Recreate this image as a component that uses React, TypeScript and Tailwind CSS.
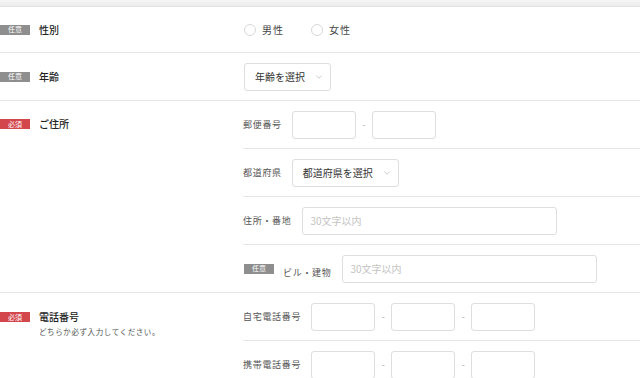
import { ChevronDown } from "lucide-react";

const font = "font-['Noto_Sans_CJK_JP','Noto_Sans',sans-serif]";

function Badge({ required }: { required?: boolean }) {
  return (
    <span
      className={`inline-flex items-center justify-center w-[30px] h-[10px] text-[7px] leading-none text-white shrink-0 ${
        required ? "bg-[#d2464c]" : "bg-[#8e8e8e]"
      }`}
    >
      {required ? "必須" : "任意"}
    </span>
  );
}

function Box({ w = "w-[64px]" }: { w?: string }) {
  return <div className={`${w} h-[28px] border border-[#dedede] rounded-[3px] bg-white shrink-0`} />;
}

function Dash() {
  return <span className="w-[16px] text-center text-[9px] text-[#aaa] shrink-0">-</span>;
}

function SubLabel({ children }: { children: React.ReactNode }) {
  return <span className="text-[9px] tracking-[0.7px] text-[#555] mr-[10px] whitespace-nowrap">{children}</span>;
}

function Select({ label, w }: { label: string; w: string }) {
  return (
    <div className={`${w} h-[28px] border border-[#dedede] rounded-[3px] flex items-center justify-between pl-[10px] pr-[6px]`}>
      <span className="text-[10px] text-[#333]">{label}</span>
      <ChevronDown size={10} strokeWidth={1.2} className="text-[#999]" />
    </div>
  );
}

function TextBox({ w }: { w: string }) {
  return (
    <div className={`${w} h-[28px] border border-[#dedede] rounded-[3px] flex items-center pl-[8px]`}>
      <span className="text-[10px] text-[#c4c4c4]">30文字以内</span>
    </div>
  );
}

function Left({ required, label, note }: { required?: boolean; label: string; note?: string }) {
  return (
    <div className="w-[243px] shrink-0">
      <div className="flex items-center gap-[9px]">
        <Badge required={required} />
        <span className="text-[10px] font-medium text-[#222] leading-[14px]">{label}</span>
      </div>
      {note && <p className="ml-[39px] mt-[2px] text-[7.5px] tracking-[0.6px] text-[#555]">{note}</p>}
    </div>
  );
}

function Radio({ label }: { label: string }) {
  return (
    <div className="flex items-center gap-[6px]">
      <span className="w-[12px] h-[12px] rounded-full border border-[#d8d8d8]" />
      <span className="text-[10px] tracking-[1px] text-[#444]">{label}</span>
    </div>
  );
}

export default function App() {
  return (
    <div className={`w-[640px] h-[378px] overflow-hidden bg-white ${font}`}>
      <div className="h-[7px] bg-gradient-to-b from-[#f5f5f5] to-[#ececec] border-b border-[#e2e2e2]" />

      <div className="h-[46px] flex items-center border-b border-[#e6e6e6]">
        <Left label="性別" />
        <div className="flex items-center gap-[27px] pl-[1px]">
          <Radio label="男性" />
          <Radio label="女性" />
        </div>
      </div>

      <div className="h-[48px] flex items-center border-b border-[#e6e6e6]">
        <Left label="年齢" />
        <div className="pl-[1px]">
          <Select label="年齢を選択" w="w-[87px]" />
        </div>
      </div>

      <div className="flex border-b border-[#e6e6e6]">
        <div className="pt-[16px]">
          <Left required label="ご住所" />
        </div>
        <div className="flex-1">
          <div className="h-[48px] flex items-center border-b border-[#e6e6e6]">
            <SubLabel>郵便番号</SubLabel>
            <Box />
            <Dash />
            <Box />
          </div>
          <div className="h-[48px] flex items-center border-b border-[#e6e6e6]">
            <SubLabel>都道府県</SubLabel>
            <Select label="都道府県を選択" w="w-[107px]" />
          </div>
          <div className="h-[48px] flex items-center border-b border-[#e6e6e6]">
            <SubLabel>住所・番地</SubLabel>
            <TextBox w="w-[255px]" />
          </div>
          <div className="h-[47px] flex items-center pl-[1px]">
            <Badge />
            <span className="ml-[9px]">
              <SubLabel>ビル・建物</SubLabel>
            </span>
            <TextBox w="w-[255px]" />
          </div>
        </div>
      </div>

      <div className="flex">
        <div className="pt-[17px]">
          <Left required label="電話番号" note="どちらか必ず入力してください。" />
        </div>
        <div className="flex-1">
          <div className="h-[48px] flex items-center border-b border-[#e6e6e6]">
            <SubLabel>自宅電話番号</SubLabel>
            <Box />
            <Dash />
            <Box />
            <Dash />
            <Box />
          </div>
          <div className="h-[48px] flex items-center">
            <SubLabel>携帯電話番号</SubLabel>
            <Box />
            <Dash />
            <Box />
            <Dash />
            <Box />
          </div>
        </div>
      </div>
    </div>
  );
}
